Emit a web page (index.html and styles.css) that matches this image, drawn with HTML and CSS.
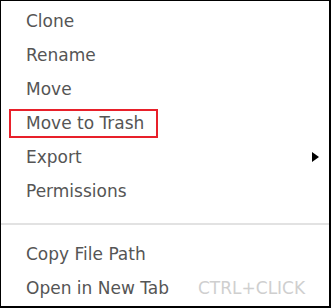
FILE: index.html
```html
<!DOCTYPE html>
<html>
<head>
<meta charset="utf-8">
<link rel="stylesheet" href="styles.css">
</head>
<body>
<div class="menu">
  <div class="group">
    <div class="item"><span class="label">Clone</span></div>
    <div class="item"><span class="label">Rename</span></div>
    <div class="item"><span class="label">Move</span></div>
    <div class="item"><span class="label highlight">Move to Trash</span></div>
    <div class="item"><span class="label">Export</span><span class="arrow"></span></div>
    <div class="item"><span class="label">Permissions</span></div>
  </div>
  <div class="separator"></div>
  <div class="group lower">
    <div class="item"><span class="label">Copy File Path</span></div>
    <div class="item"><span class="label">Open in New Tab</span><span class="shortcut">CTRL+CLICK</span></div>
  </div>
</div>
</body>
</html>
```
FILE: styles.css
```css
html, body {
  margin: 0;
  padding: 0;
  background: #fff;
}
.menu {
  box-sizing: border-box;
  width: 331px;
  height: 308px;
  border: 1px solid #000;
  border-right-width: 2px;
  border-bottom-width: 2px;
  background: #fff;
  font-family: "DejaVu Sans", Verdana, sans-serif;
  font-size: 17px;
  color: #555;
  display: flex;
  flex-direction: column;
  white-space: nowrap;
}
.group {
  padding-top: 3px;
  display: flex;
  flex-direction: column;
}
.group.lower {
  padding-top: 12px;
}
.item {
  height: 34px;
  display: flex;
  align-items: center;
  padding-left: 8px;
  padding-right: 10px;
}
.label {
  display: inline-block;
  padding: 0 14px 0 15px;
  border: 2px solid transparent;
  line-height: 25px;
}
.label.highlight {
  border-color: #e8202a;
  padding-right: 12px;
}
.arrow {
  margin-left: auto;
  width: 0;
  height: 0;
  border-top: 5px solid transparent;
  border-bottom: 5px solid transparent;
  border-left: 7px solid #000;
}
.shortcut {
  margin-left: 13px;
  color: #cfcfcf;
}
.separator {
  margin-top: 15px;
  height: 2px;
  background: #e2e2e2;
}
```
